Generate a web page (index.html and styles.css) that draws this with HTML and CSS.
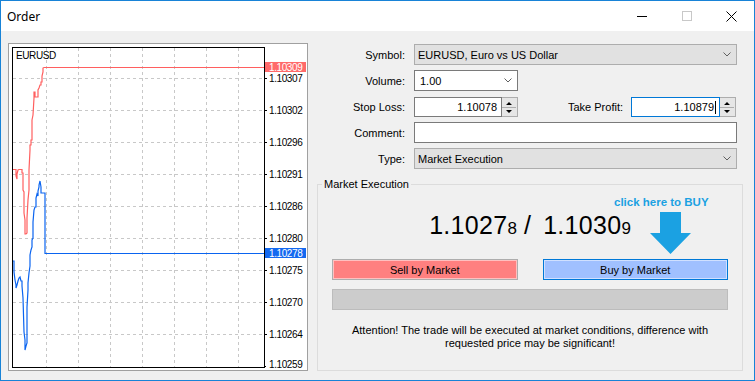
FILE: index.html
```html
<!DOCTYPE html>
<html lang="en">
<head>
    <meta charset="UTF-8">
    <title>Order</title>
    <link rel="stylesheet" href="styles.css">
</head>
<body>
    <div class="window">
        <div class="titlebar">
            <span class="title">Order</span>
            <div class="controls">
                <span><svg width="10" height="10"><path d="M0 5.5H10" stroke="#000"/></svg></span>
                <span><svg width="10" height="10"><rect x=".5" y=".5" width="9" height="9" fill="none" stroke="#c8c8c8"/></svg></span>
                <span><svg width="11" height="11"><path d="M.5 .5L10.5 10.5M10.5 .5L.5 10.5" stroke="#000"/></svg></span>
            </div>
        </div>
        <div class="content">
            <div class="chart">
                <svg width="298" height="326" viewBox="9 44 298 326">
                    <g class="grid">
                        <path d="M46.5 48V367M78.5 48V367M110.5 48V367M142.5 48V367M174.5 48V367M206.5 48V367M238.5 48V367"/>
                        <path d="M13 78.5H264M13 110.5H264M13 142.5H264M13 174.5H264M13 206.5H264M13 238.5H264M13 270.5H264M13 302.5H264M13 334.5H264"/>
                    </g>
                    <rect class="frame" x="12.5" y="47.5" width="252" height="320"/>
                    <path class="ticks" d="M264 78.5H267M264 110.5H267M264 142.5H267M264 174.5H267M264 206.5H267M264 238.5H267M264 270.5H267M264 302.5H267M264 334.5H267M264 366.5H266"/>
                    <text class="symbol" x="16" y="59">EURUSD</text>
                    <polyline class="ask" points="13,169.5 16,169.5 16,176 17,179 17,174 18,170 19,169.5 22,169.5 22,173 23,173 23,190 24,192 24,213 25,220 25,234 26,234 27,233 27,218 28,200 29,190 29,170 30,150 30,145 31,145 31,140 32,140 32,120 33,115 34,98 34,92 35,92 35,97 38,97 38,90 39,88 40,85 41,85 41,82 42,82 42,76 43,72 43,68 44,67.5 264,67.5"/>
                    <polyline class="bid" points="13,261 14,261 14,272 15,280 16,285 16,288 17,285 18,281 19,278 20,277 21,281 22,281 22,286 23,298 24,332 25,340 25,350 26,346 27,343 27,307 28,290 28,283 29,273 30,266 30,255 31,250 32,247 32,240 33,238 33,222 34,210 35,207 36,207 36,198 37,194 38,196 38,191 39,187 39,185 40,181 41,187 41,193 45,193 45,253.5 264,253.5"/>
                    <g class="axis">
                        <text x="269" y="82">1.10307</text>
                        <text x="269" y="114">1.10302</text>
                        <text x="269" y="146">1.10296</text>
                        <text x="269" y="178">1.10291</text>
                        <text x="269" y="210">1.10286</text>
                        <text x="269" y="242">1.10280</text>
                        <text x="269" y="274">1.10275</text>
                        <text x="269" y="306">1.10270</text>
                        <text x="269" y="338">1.10264</text>
                        <text x="269" y="368">1.10259</text>
                    </g>
                    <rect class="tag-ask" x="265" y="62" width="41" height="10"/>
                    <text class="tag-text" x="269" y="71">1.10309</text>
                    <rect class="tag-bid" x="265" y="248" width="41" height="10"/>
                    <text class="tag-text" x="269" y="257">1.10278</text>
                </svg>
            </div>
            <div class="side">
                <div class="form">
                    <label>Symbol:</label>
                    <div class="combo">
                        <span>EURUSD, Euro vs US Dollar</span>
                        <svg width="8" height="5"><path d="M.5 .5L4 4L7.5 .5" fill="none" stroke="#606060"/></svg>
                    </div>
                    <label>Volume:</label>
                    <div class="combo edit">
                        <span>1.00</span>
                        <svg width="8" height="5"><path d="M.5 .5L4 4L7.5 .5" fill="none" stroke="#606060"/></svg>
                    </div>
                    <label>Stop Loss:</label>
                    <div class="row">
                        <div class="spin">
                            <div class="field">1.10078</div>
                            <div class="arrows"><svg width="14" height="19"><path d="M7 4L10 7H4Z M4 12H10L7 15Z" fill="#000"/><path d="M0 9.5H14" stroke="#adadad"/></svg></div>
                        </div>
                        <label class="tp">Take Profit:</label>
                        <div class="spin tp-spin">
                            <div class="field focus">1.10879<span class="caret"></span></div>
                            <div class="arrows"><svg width="14" height="19"><path d="M7 4L10 7H4Z M4 12H10L7 15Z" fill="#000"/><path d="M0 9.5H14" stroke="#adadad"/></svg></div>
                        </div>
                    </div>
                    <label>Comment:</label>
                    <div class="field comment"></div>
                    <label>Type:</label>
                    <div class="combo">
                        <span>Market Execution</span>
                        <svg width="8" height="5"><path d="M.5 .5L4 4L7.5 .5" fill="none" stroke="#606060"/></svg>
                    </div>
                </div>
                <fieldset class="group">
                    <legend>Market Execution</legend>
                    <div class="group-body">
                        <div class="prices">1.1027<small>8</small><span class="sep">/</span>1.1030<small>9</small></div>
                        <div class="buttons">
                            <button class="sell">Sell by Market</button>
                            <button class="buy">Buy by Market</button>
                        </div>
                        <div class="bar"></div>
                        <p class="note">Attention! The trade will be executed at market conditions, difference with<br>requested price may be significant!</p>
                        <div class="hint">click here to BUY</div>
                        <svg class="hint-arrow" width="41" height="42"><path d="M10 0H31V21H41L20.5 42L0 21H10Z"/></svg>
                    </div>
                </fieldset>
            </div>
        </div>
    </div>
</body>
</html>
```
FILE: styles.css
```css
body {
    margin: 0;
    font-family: "Liberation Sans", Arial, sans-serif;
    font-size: 11px;
    color: #000;
}
.window {
    width: 755px;
    height: 381px;
    box-sizing: border-box;
    border: 1px solid #1883d7;
    background-color: #f0f0f0;
    overflow: hidden;
}
.titlebar {
    height: 30px;
    background-color: #fff;
    display: flex;
    align-items: center;
}
.title {
    flex: 1;
    padding-left: 6px;
    font-family: "Noto Sans", "Open Sans", sans-serif;
    font-size: 12px;
}
.controls {
    display: flex;
    height: 30px;
}
.controls span {
    width: 45px;
    display: flex;
    align-items: center;
    justify-content: center;
}
.content {
    display: flex;
    padding: 12px 0 0 7px;
}

/* chart */
.chart {
    width: 300px;
    height: 328px;
    box-sizing: border-box;
    border: 1px solid #a0a0a0;
    background-color: #fff;
}
.chart svg {
    display: block;
}
.grid path {
    stroke: #c8c8c8;
    stroke-dasharray: 3 3;
    fill: none;
    shape-rendering: crispEdges;
}
.frame,
.ticks {
    fill: none;
    stroke: #000;
    shape-rendering: crispEdges;
}
.ask,
.bid {
    fill: none;
    stroke-width: 1.2;
}
.ask {
    stroke: #ff5f5f;
}
.bid {
    stroke: #0a64f0;
}
.symbol,
.axis text,
.tag-text {
    font-family: "Liberation Sans", Arial, sans-serif;
    font-size: 10px;
    letter-spacing: -0.4px;
}
.tag-ask {
    fill: #ff6a6a;
}
.tag-bid {
    fill: #1469f0;
}
.tag-text {
    fill: #fff;
}

/* order form */
.side {
    flex: 1;
}
.form {
    display: grid;
    grid-template-columns: 97px 323px;
    grid-auto-rows: 21px;
    column-gap: 9px;
    row-gap: 5px;
    margin-top: 1px;
}
.form label {
    text-align: right;
    align-self: center;
}
.combo {
    box-sizing: border-box;
    border: 1px solid #adadad;
    background-color: #e1e1e1;
    display: flex;
    align-items: center;
    justify-content: space-between;
    padding: 0 5px 0 3px;
}
.combo.edit {
    width: 104px;
    background-color: #fff;
    border-color: #7a7a7a;
    padding-left: 5px;
}
.row {
    display: flex;
    align-items: center;
}
.spin {
    display: flex;
    width: 104px;
    height: 20px;
}
.spin.tp-spin {
    width: 105px;
    margin-right: 1px;
}
.field {
    flex: 1;
    box-sizing: border-box;
    border: 1px solid #7a7a7a;
    background-color: #fff;
    text-align: right;
    padding-right: 4px;
    line-height: 18px;
}
.field.focus {
    border-color: #0078d7;
    padding-right: 3px;
}
.caret {
    display: inline-block;
    width: 1px;
    height: 13px;
    background-color: #000;
    vertical-align: -3px;
    margin-left: 1px;
}
.arrows {
    width: 16px;
    box-sizing: border-box;
    border: 1px solid #adadad;
    border-left: none;
    background-color: #e6e6e6;
}
.arrows svg {
    display: block;
}
.tp {
    flex: 1;
    padding-right: 8px;
}
.comment {
    height: 21px;
}

/* market execution group */
.group {
    width: 426px;
    box-sizing: border-box;
    margin: 9px 0 0 9px;
    padding: 0 0 20px;
    border: 1px solid #dcdcdc;
}
.group legend {
    margin-left: 4px;
    padding: 0 2px;
    line-height: 13px;
}
.group-body {
    position: relative;
    padding: 20px 14px 0;
}
.prices {
    text-align: center;
    font-size: 25px;
    line-height: 28px;
    height: 28px;
    letter-spacing: 0.3px;
}
.prices small {
    font-size: 17px;
    line-height: 1;
    letter-spacing: 0;
}
.sep {
    margin: 0 12px 0 7px;
}
.buttons {
    display: flex;
    gap: 25px;
    margin-top: 20px;
}
.buttons button {
    flex: 1;
    height: 21px;
    padding: 0;
    font: inherit;
    color: #000;
    border: 1px solid #adadad;
    box-shadow: inset 0 0 0 1px rgba(255, 255, 255, 0.5);
}
.sell {
    background-color: #ff8080;
}
.buy {
    background-color: #a0c0ff;
    border-color: #0078d7 !important;
}
.bar {
    height: 21px;
    margin-top: 9px;
    box-sizing: border-box;
    border: 1px solid #bcbcbc;
    background-color: #cccccc;
}
.note {
    margin: 14px 0 0;
    text-align: center;
    line-height: 13px;
}
.hint {
    position: absolute;
    left: 296px;
    top: 5px;
    color: #1ba1e2;
    font-weight: bold;
    font-size: 11.5px;
    line-height: 13px;
}
.hint-arrow {
    position: absolute;
    left: 332px;
    top: 21px;
    fill: #1ba1e2;
}
```
